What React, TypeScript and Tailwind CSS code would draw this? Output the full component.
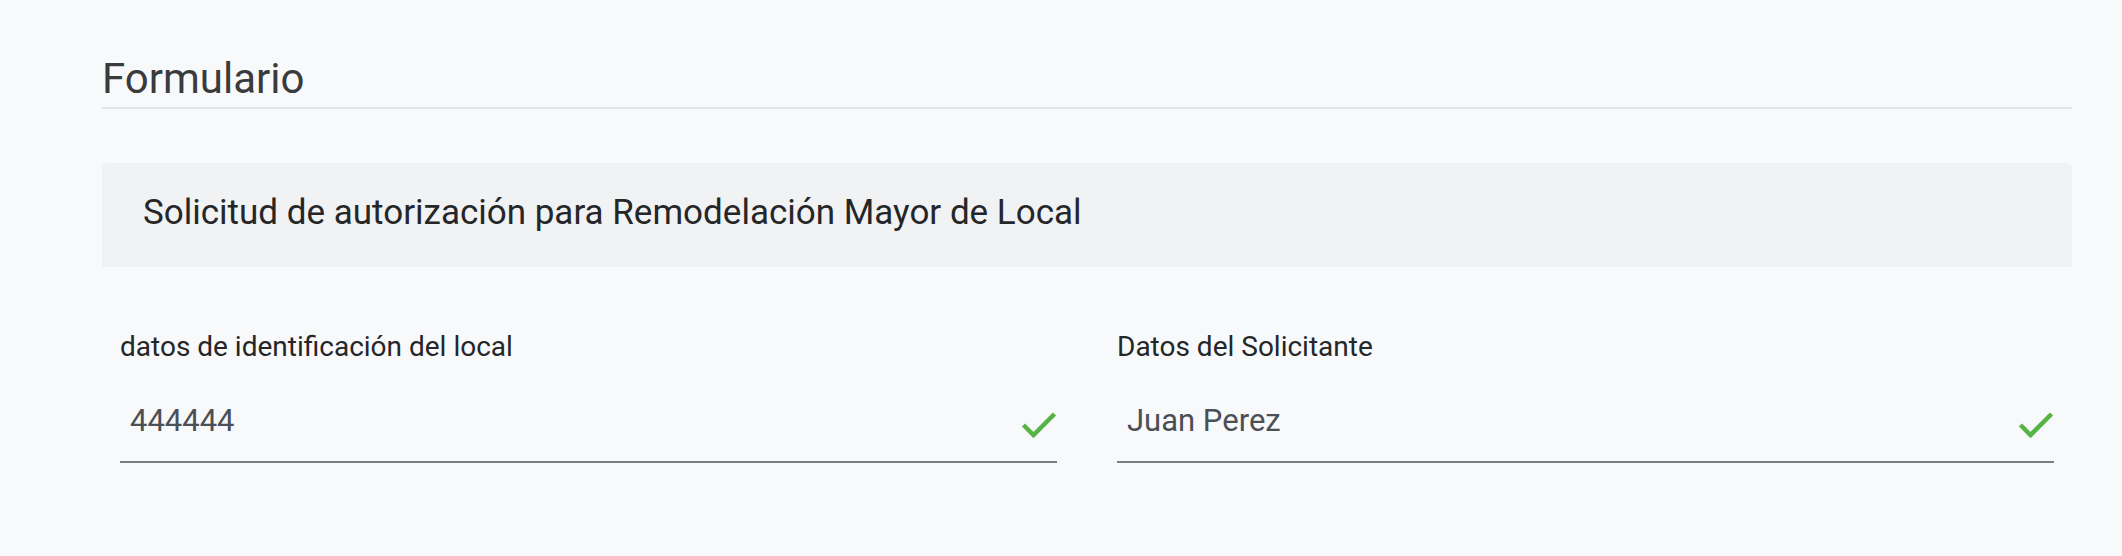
const fields = [
  { label: 'datos de identificación del local', value: '444444' },
  { label: 'Datos del Solicitante', value: 'Juan Perez' },
];

function Check() {
  return (
    <svg width="36" height="28" viewBox="0 0 36 28" className="mt-[8px] shrink-0">
      <polyline points="2.5,14 12.5,24 33.5,3" fill="none" stroke="#56b447" strokeWidth="4.5" />
    </svg>
  );
}

export default function App() {
  return (
    <div className="min-h-screen bg-[#f8f9fb] pl-[102px] pr-[50px] pt-[55px] font-['Roboto',sans-serif]">
      {/* Page title */}
      <div className="border-b-2 border-[#e2e3e8] pb-[4px]">
        <h1 className="text-[42px] leading-[48px] text-[#3a3b3d]">Formulario</h1>
      </div>

      {/* Form heading */}
      <div className="mt-[54px] h-[104px] rounded-t-[5px] bg-[#f1f2f4] pl-[41px] pt-[30px]">
        <h2 className="text-[35px] leading-[40px] text-[#252628]">
          Solicitud de autorización para Remodelación Mayor de Local
        </h2>
      </div>

      {/* Fields */}
      <div className="grid grid-cols-2 gap-x-[60px] px-[18px] mt-[64px]">
        {fields.map((f) => (
          <div key={f.label}>
            <label className="block text-[28px] leading-[32px] text-[#252628]">{f.label}</label>
            <div className="mt-[40px] flex items-start border-b-2 border-[#7d7e80] pb-[22px]">
              <span className="flex-1 pl-[10px] text-[31px] leading-[36px] text-[#4b4f56]">{f.value}</span>
              <Check />
            </div>
          </div>
        ))}
      </div>
    </div>
  );
}
